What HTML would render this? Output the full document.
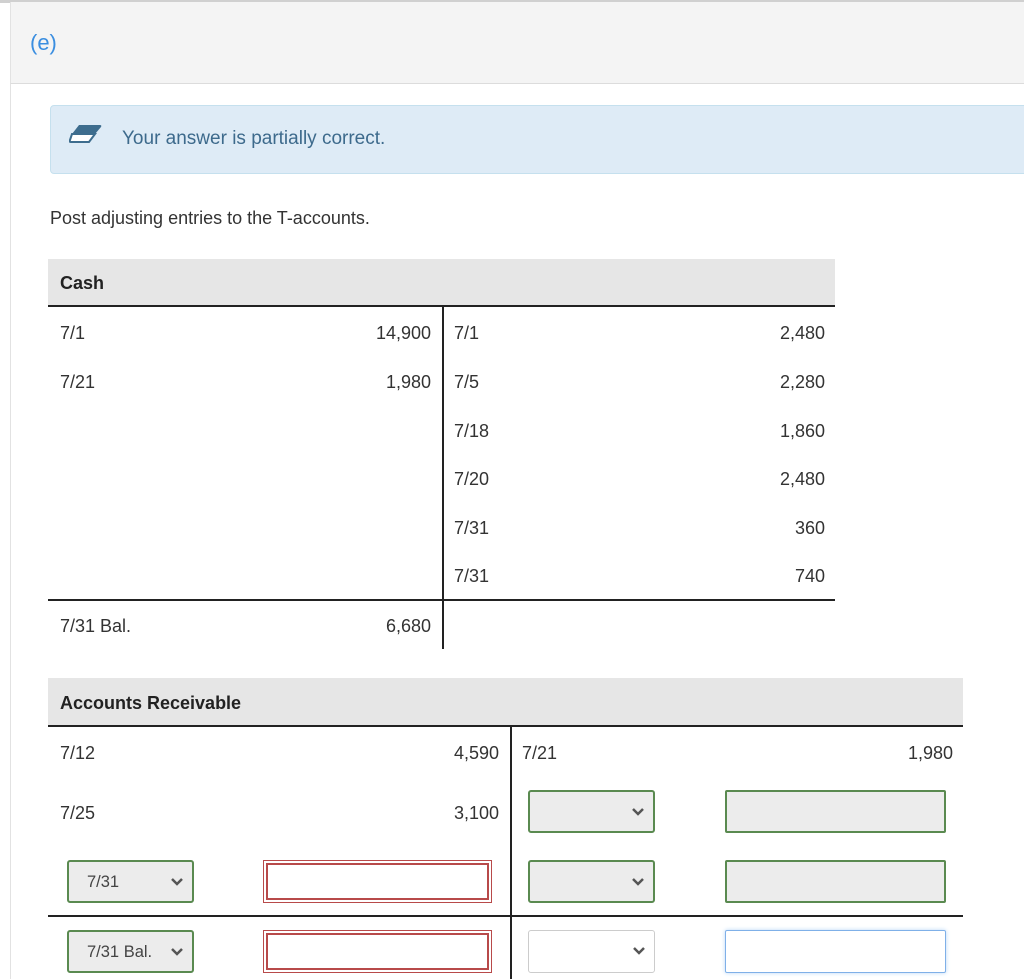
<!DOCTYPE html>
<html><head><meta charset="utf-8"><style>
*{margin:0;padding:0;box-sizing:border-box}
body{width:1024px;height:979px;background:#fff;font-family:"Liberation Sans",sans-serif;color:#333;position:relative;overflow:hidden}
.a{position:absolute;white-space:nowrap}
.t{font-size:18px;line-height:20px;color:#333}
.r{text-align:right}
.sel{position:absolute;height:43px;border:2px solid #5a8a50;border-radius:3px;background:#ececec;font-size:16.5px;color:#444;padding:11px 0 0 18px}
.sel svg{position:absolute;right:9px;top:16px}
.inp{position:absolute;height:43px;border:2px solid #5a8a50;border-radius:2px;background:#ececec}
.red{position:absolute;height:43px;border:1px solid #b84a4a;background:#fff;padding:2px}
.red div{width:100%;height:100%;border:2px solid #b84a4a}
</style></head><body>
<div class="a" style="left:0;top:0;width:1024px;height:3px;background:#d0d0d0"></div>
<div class="a" style="left:10px;top:2px;width:1014px;height:82px;background:#f4f4f4;border-bottom:1px solid #dcdcdc;border-left:1px solid #e2e2e2"></div>
<div class="a" style="left:10px;top:84px;width:1px;height:895px;background:#e2e2e2"></div>
<div class="a" style="left:30px;top:30px;font-size:22px;color:#3b8ee0">(e)</div>
<div class="a" style="left:50px;top:105px;width:980px;height:69px;background:#deebf6;border:1px solid #c5e0ee;border-radius:4px"></div>
<svg class="a" style="left:69px;top:124px" width="33" height="21" viewBox="0 0 33 21"><path d="M10 1H31Q33 1 32 3L26 10H3Z" fill="#3e6d8e"/><path d="M3 10H26L20 18H2Q0 18 1 16Z" fill="#fff" stroke="#3e6d8e" stroke-width="2"/></svg>
<div class="a" style="left:122px;top:128px;font-size:19px;color:#3d6a8c">Your answer is partially correct.</div>
<div class="a t" style="left:50px;top:208px">Post adjusting entries to the T-accounts.</div>

<div class="a" style="left:48px;top:259px;width:787px;height:48px;background:#e6e6e6;border-bottom:2px solid #222"></div>
<div class="a t" style="left:60px;top:273px;font-weight:bold;color:#222">Cash</div>
<div class="a" style="left:442px;top:307px;width:2px;height:342px;background:#222"></div>
<div class="a" style="left:48px;top:599px;width:787px;height:2px;background:#222"></div>
<div class="a t" style="left:60px;top:323px">7/1</div><div class="a t r" style="left:331px;width:100px;top:323px">14,900</div>
<div class="a t" style="left:60px;top:372px">7/21</div><div class="a t r" style="left:331px;width:100px;top:372px">1,980</div>
<div class="a t" style="left:454px;top:323px">7/1</div><div class="a t r" style="left:725px;width:100px;top:323px">2,480</div>
<div class="a t" style="left:454px;top:372px">7/5</div><div class="a t r" style="left:725px;width:100px;top:372px">2,280</div>
<div class="a t" style="left:454px;top:421px">7/18</div><div class="a t r" style="left:725px;width:100px;top:421px">1,860</div>
<div class="a t" style="left:454px;top:469px">7/20</div><div class="a t r" style="left:725px;width:100px;top:469px">2,480</div>
<div class="a t" style="left:454px;top:518px">7/31</div><div class="a t r" style="left:725px;width:100px;top:518px">360</div>
<div class="a t" style="left:454px;top:566px">7/31</div><div class="a t r" style="left:725px;width:100px;top:566px">740</div>
<div class="a t" style="left:60px;top:616px">7/31 Bal.</div><div class="a t r" style="left:331px;width:100px;top:616px">6,680</div>

<div class="a" style="left:48px;top:678px;width:915px;height:49px;background:#e6e6e6;border-bottom:2px solid #222"></div>
<div class="a t" style="left:60px;top:693px;font-weight:bold;color:#222">Accounts Receivable</div>
<div class="a" style="left:510px;top:727px;width:2px;height:252px;background:#222"></div>
<div class="a" style="left:48px;top:915px;width:915px;height:2px;background:#222"></div>
<div class="a t" style="left:60px;top:743px">7/12</div><div class="a t r" style="left:399px;width:100px;top:743px">4,590</div>
<div class="a t" style="left:522px;top:743px">7/21</div><div class="a t r" style="left:853px;width:100px;top:743px">1,980</div>
<div class="a t" style="left:60px;top:803px">7/25</div><div class="a t r" style="left:399px;width:100px;top:803px">3,100</div>

<div class="sel" style="left:528px;top:790px;width:127px"><svg width="12" height="8" viewBox="0 0 12 8"><path d="M1 1L6 6L11 1" fill="none" stroke="#555" stroke-width="2.5"/></svg></div>
<div class="inp" style="left:725px;top:790px;width:221px"></div>

<div class="sel" style="left:67px;top:860px;width:127px">7/31<svg width="12" height="8" viewBox="0 0 12 8"><path d="M1 1L6 6L11 1" fill="none" stroke="#555" stroke-width="2.5"/></svg></div>
<div class="red" style="left:263px;top:860px;width:229px"><div></div></div>
<div class="sel" style="left:528px;top:860px;width:127px"><svg width="12" height="8" viewBox="0 0 12 8"><path d="M1 1L6 6L11 1" fill="none" stroke="#555" stroke-width="2.5"/></svg></div>
<div class="inp" style="left:725px;top:860px;width:221px"></div>

<div class="sel" style="left:67px;top:930px;width:127px">7/31 Bal.<svg width="12" height="8" viewBox="0 0 12 8"><path d="M1 1L6 6L11 1" fill="none" stroke="#555" stroke-width="2.5"/></svg></div>
<div class="red" style="left:263px;top:930px;width:229px"><div></div></div>
<div class="sel" style="left:528px;top:930px;width:127px;border:1px solid #ccc;background:#fff"><svg width="12" height="8" viewBox="0 0 12 8"><path d="M1 1L6 6L11 1" fill="none" stroke="#555" stroke-width="2.5"/></svg></div>
<div class="a" style="left:725px;top:930px;width:221px;height:43px;border:1px solid #7fb0e8;box-shadow:0 0 4px #b8d6f6;border-radius:2px"></div>
</body></html>
